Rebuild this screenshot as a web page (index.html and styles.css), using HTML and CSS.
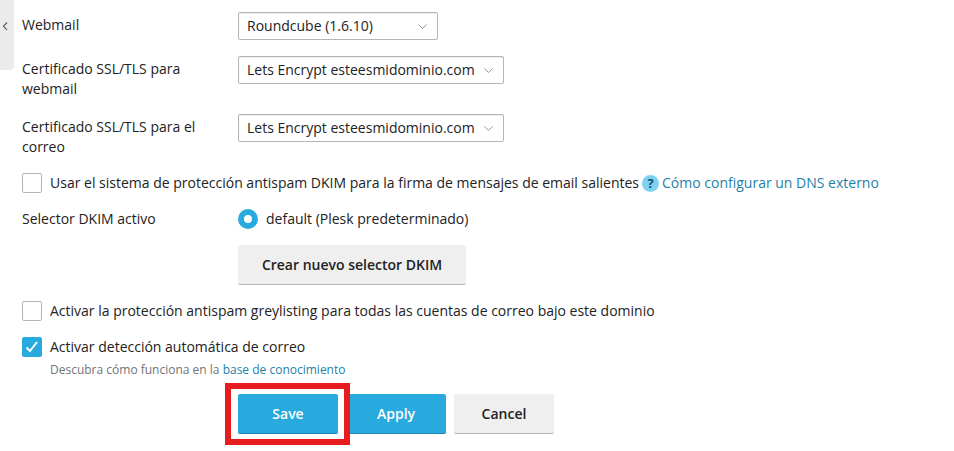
FILE: index.html
```html
<!DOCTYPE html>
<html lang="en">
<head>
    <meta charset="UTF-8">
    <meta name="viewport" content="width=device-width, initial-scale=1.0">
    <title>Mail settings</title>
    <link rel="stylesheet" href="styles.css">
</head>
<body>

<div class="side-toggle">
    <svg width="6" height="10" viewBox="0 0 6 10"><path d="M5 1.500 1.500 5.200 5 9" fill="none" stroke="#555" stroke-width="1.100"/></svg>
</div>

<form class="settings">
    <div class="row row-webmail">
        <div class="label">Webmail</div>
        <div class="select select-short">
            <span>Roundcube (1.6.10)</span>
            <svg class="chevron" width="9" height="5" viewBox="0 0 9 5"><path d="M.5.500l4 4 4-4" fill="none" stroke="#999" stroke-width="1"/></svg>
        </div>
    </div>
    <div class="row row-cert">
        <div class="label">Certificado SSL/TLS para webmail</div>
        <div class="select">
            <span>Lets Encrypt esteesmidominio.com</span>
            <svg class="chevron" width="9" height="5" viewBox="0 0 9 5"><path d="M.5.500l4 4 4-4" fill="none" stroke="#999" stroke-width="1"/></svg>
        </div>
    </div>
    <div class="row row-cert">
        <div class="label">Certificado SSL/TLS para el correo</div>
        <div class="select">
            <span>Lets Encrypt esteesmidominio.com</span>
            <svg class="chevron" width="9" height="5" viewBox="0 0 9 5"><path d="M.5.500l4 4 4-4" fill="none" stroke="#999" stroke-width="1"/></svg>
        </div>
    </div>

    <div class="check-row check-dkim">
        <span class="checkbox"></span>
        <span>Usar el sistema de protección antispam DKIM para la firma de mensajes de email salientes</span>
        <span class="help">?</span>
        <a class="link" href="#">Cómo configurar un DNS externo</a>
    </div>

    <div class="row row-radio">
        <div class="label">Selector DKIM activo</div>
        <div class="radio-field">
            <span class="radio"></span>
            <span>default (Plesk predeterminado)</span>
        </div>
    </div>

    <div class="row-action">
        <button type="button" class="button button-wide">Crear nuevo selector DKIM</button>
    </div>

    <div class="check-row check-grey">
        <span class="checkbox"></span>
        <span>Activar la protección antispam greylisting para todas las cuentas de correo bajo este dominio</span>
    </div>

    <div class="check-row check-auto">
        <span class="checkbox checked">
            <svg width="20" height="20" viewBox="0 0 20 20"><path d="M4.500 10.500l3.500 3.500 7-9" fill="none" stroke="#fff" stroke-width="2"/></svg>
        </span>
        <span>Activar detección automática de correo</span>
    </div>
    <div class="hint">Descubra cómo funciona en la <a class="link" href="#">base de conocimiento</a></div>

    <div class="actions">
        <div class="save-wrap">
            <button type="button" class="button primary">Save</button>
            <div class="highlight"></div>
        </div>
        <button type="button" class="button primary">Apply</button>
        <button type="button" class="button">Cancel</button>
    </div>
</form>

</body>
</html>
```

FILE: styles.css
```css
* {
    box-sizing: border-box;
}
body {
    font-family: "Open Sans", Arial, sans-serif;
    font-size: 14px;
    line-height: 20px;
    color: #222;
    background-color: #fff;
    margin: 0;
    height: 451px;
    overflow: hidden;
}
.side-toggle {
    position: absolute;
    left: 0;
    top: 0;
    width: 14px;
    height: 70px;
    padding: 21px 0 0 2px;
    background-color: #ebebeb;
    border-bottom-right-radius: 4px;
    line-height: 8px;
}
.settings {
    padding: 12px 0 0 22px;
}
.row {
    display: flex;
}
.label {
    width: 216px;
    padding-right: 40px;
    flex-shrink: 0;
}
.row-webmail {
    height: 44px;
}
.row-cert {
    height: 58px;
}
.row-webmail .label {
    padding-top: 3px;
}
.row-cert .label {
    padding-top: 3px;
}
.select {
    width: 266px;
    height: 28px;
    border: 1px solid #b5b5b5;
    border-radius: 2px;
    padding: 0 10px 0 8px;
    display: flex;
    align-items: center;
    justify-content: space-between;
    box-shadow: inset 0 1px 1px #eee;
}
.select-short {
    width: 200px;
}
.chevron {
    flex-shrink: 0;
}
.check-row {
    display: flex;
    align-items: center;
    height: 20px;
}
.check-dkim {
    margin-top: 1px;
}
.check-grey {
    margin-top: 16px;
}
.check-auto {
    margin-top: 16px;
}
.checkbox {
    width: 20px;
    height: 20px;
    border: 1px solid #b5b5b5;
    border-radius: 2px;
    margin-right: 8px;
    flex-shrink: 0;
}
.checkbox.checked {
    background-color: #28aade;
    border: none;
}
.checkbox svg {
    display: block;
}
.help {
    width: 17px;
    height: 17px;
    border-radius: 50%;
    margin: 0 3px;
    background-color: #7fd0f2;
    color: #14506e;
    font-size: 13px;
    font-weight: 700;
    line-height: 17px;
    text-align: center;
}
.link {
    color: #1f7fa8;
    text-decoration: none;
}
.row-radio {
    margin-top: 16px;
    height: 20px;
}
.radio-field {
    display: flex;
    align-items: center;
}
.radio {
    width: 20px;
    height: 20px;
    border: 6px solid #28aade;
    border-radius: 50%;
    background-color: #fff;
    margin-right: 8px;
}
.row-action {
    margin: 16px 0 0 216px;
}
.button {
    font-family: inherit;
    font-size: 14px;
    font-weight: 600;
    width: 100px;
    height: 40px;
    padding: 0;
    color: #222;
    border: none;
    border-bottom: 1px solid #b5b5b5;
    border-radius: 2px;
    background-color: #efefef;
    display: block;
}
.button-wide {
    width: 228px;
}
.primary {
    color: #fff;
    background-color: #28aade;
    border-bottom-color: #1f86b3;
}
.hint {
    font-size: 12px;
    line-height: 16px;
    color: #737373;
    margin: 5px 0 0 28px;
}
.actions {
    display: flex;
    gap: 8px;
    margin: 16px 0 0 216px;
}
.save-wrap {
    position: relative;
}
.highlight {
    position: absolute;
    left: -13px;
    top: -11px;
    right: -12px;
    bottom: -11px;
    border: 6px solid #e71c1f;
}
```
